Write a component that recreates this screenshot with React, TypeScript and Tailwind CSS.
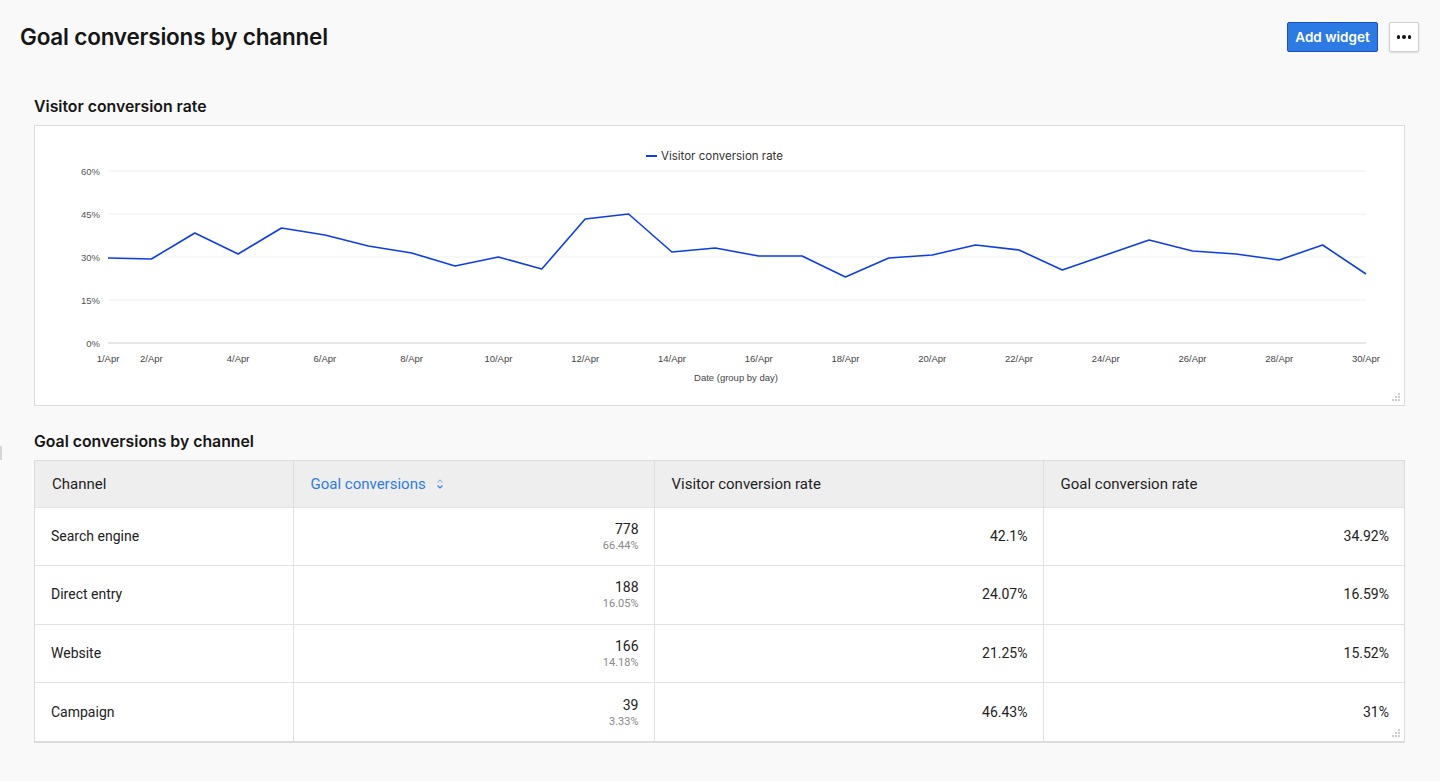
import React from "react"

const ys = [258, 259, 233, 254, 228, 235, 246, 253, 266, 257, 269, 219, 214, 252, 248, 256, 256, 277, 258, 255, 245, 250, 270, 255, 240, 251, 254, 260, 245, 274]
const x0 = 108
const step = (1366 - 108) / 29
const xOf = (i: number) => x0 + i * step

const grid = [
    { y: 171, label: "60%" },
    { y: 214, label: "45%" },
    { y: 257, label: "30%" },
    { y: 300, label: "15%" },
    { y: 343, label: "0%" },
]

const rows = [
    { channel: "Search engine", goals: "778", share: "66.44%", vcr: "42.1%", gcr: "34.92%" },
    { channel: "Direct entry", goals: "188", share: "16.05%", vcr: "24.07%", gcr: "16.59%" },
    { channel: "Website", goals: "166", share: "14.18%", vcr: "21.25%", gcr: "15.52%" },
    { channel: "Campaign", goals: "39", share: "3.33%", vcr: "46.43%", gcr: "31%" },
]

function ResizeGrip() {
    return (
        <svg width="10" height="10" viewBox="0 0 10 10" className="absolute right-[3px] bottom-[3px]">
            {[
                [8, 2],
                [5, 5],
                [8, 5],
                [2, 8],
                [5, 8],
                [8, 8],
            ].map(([cx, cy], i) => (
                <circle key={i} cx={cx} cy={cy} r="0.9" fill="#b5b5b5" />
            ))}
        </svg>
    )
}

function Chart() {
    const labels = [1, 2, 4, 6, 8, 10, 12, 14, 16, 18, 20, 22, 24, 26, 28, 30]
    const pts = ys.map((y, i) => `${xOf(i).toFixed(1)},${y}`).join(" ")
    return (
        <svg width="1369" height="279" viewBox="35 126 1369 279" className="block">
            {/* legend */}
            <line x1="646" y1="156" x2="657" y2="156" stroke="#0b3ee6" strokeWidth="2" />
            <text x="661" y="160" fontSize="11.5" fill="#333" fontFamily="Inter, sans-serif">
                Visitor conversion rate
            </text>
            {/* grid */}
            {grid.map((g) => (
                <g key={g.label}>
                    <line x1="108" x2="1366" y1={g.y} y2={g.y} stroke={g.y === 343 ? "#cfcfcf" : "#efefef"} strokeWidth="1" />
                    <text x="100" y={g.y + 3.5} fontSize="9.5" fill="#555" textAnchor="end" fontFamily="'Liberation Sans', Arial, sans-serif">
                        {g.label}
                    </text>
                </g>
            ))}
            {labels.map((d) => (
                <text key={d} x={xOf(d - 1)} y="362" fontSize="9.5" fill="#444" textAnchor="middle" fontFamily="'Liberation Sans', Arial, sans-serif">
                    {d}/Apr
                </text>
            ))}
            <text x="736" y="381" fontSize="9.5" fill="#444" textAnchor="middle" fontFamily="'Liberation Sans', Arial, sans-serif">
                Date (group by day)
            </text>
            <polyline points={pts} fill="none" stroke="#0b3ee6" strokeWidth="1.6" strokeLinejoin="round" />
        </svg>
    )
}

function SortIcon() {
    return (
        <svg width="8" height="12" viewBox="0 0 8 12" className="ml-[10px] mt-[1px]">
            <path d="M1.5 4.5 L4 2 L6.5 4.5" fill="none" stroke="#9db6dc" strokeWidth="1.1" />
            <path d="M1.5 7.5 L4 10 L6.5 7.5" fill="none" stroke="#2f7ae5" strokeWidth="1.1" />
        </svg>
    )
}

export default function App() {
    return (
        <div className="min-h-[781px] bg-[#f9f9f9] relative" style={{ fontFamily: "Inter, sans-serif" }}>
            <div className="absolute left-0 top-[446px] h-[14px] w-[2px] bg-[#d6d6d6]" />
            {/* Header */}
            <div className="flex items-center justify-between pt-[22px] pl-[20px] pr-[21px]">
                <h1 className="text-[22.5px] leading-[28px] font-semibold text-[#161616] tracking-[-0.2px]">Goal conversions by channel</h1>
                <div className="flex items-center gap-[11px]">
                    <button className="h-[30px] w-[91px] rounded-[2px] border border-[#1c4fc4] bg-[#2c7be5] text-[13.5px] font-semibold text-white">
                        Add widget
                    </button>
                    <button className="flex h-[30px] w-[30px] items-center justify-center gap-[2px] rounded-[2px] border border-[#cfcfcf] bg-white shadow-[0_1px_2px_rgba(0,0,0,0.12)]">
                        <span className="h-[3.5px] w-[3.5px] rounded-full bg-[#111]" />
                        <span className="h-[3.5px] w-[3.5px] rounded-full bg-[#111]" />
                        <span className="h-[3.5px] w-[3.5px] rounded-full bg-[#111]" />
                    </button>
                </div>
            </div>

            <div className="pl-[34px] pr-[35px]">
                {/* Chart widget */}
                <h2 className="mt-[44px] text-[15.8px] leading-[22px] font-semibold text-[#161616]">Visitor conversion rate</h2>
                <div className="relative mt-[7px] h-[281px] border border-[#dcdcdc] bg-white">
                    <Chart />
                    <ResizeGrip />
                </div>

                {/* Table widget */}
                <h2 className="mt-[25px] text-[15.8px] leading-[22px] font-semibold text-[#161616]">Goal conversions by channel</h2>
                <div className="relative mt-[7px] border border-[#dcdcdc] border-b-2 bg-white" style={{ fontFamily: "Roboto, sans-serif" }}>
                    <table className="w-full border-collapse table-fixed">
                        <colgroup>
                            <col className="w-[258px]" />
                            <col className="w-[361px]" />
                            <col className="w-[389px]" />
                            <col />
                        </colgroup>
                        <thead>
                            <tr className="h-[46px] bg-[#eeeeee] text-[15px] text-[#1e1e1e]">
                                <th className="px-[17px] text-left font-normal border-r border-[#dedede]">Channel</th>
                                <th className="px-[17px] text-left font-normal border-r border-[#dedede] text-[#2f7ae5]">
                                    <span className="flex items-center">
                                        Goal conversions
                                        <SortIcon />
                                    </span>
                                </th>
                                <th className="px-[17px] text-left font-normal border-r border-[#dedede]">Visitor conversion rate</th>
                                <th className="px-[17px] text-left font-normal">Goal conversion rate</th>
                            </tr>
                        </thead>
                        <tbody>
                            {rows.map((r) => (
                                <tr key={r.channel} className="h-[58.5px] border-t border-[#e2e2e2] text-[14px] text-[#222]">
                                    <td className="px-[16px] border-r border-[#e2e2e2]">{r.channel}</td>
                                    <td className="px-[15px] text-right border-r border-[#e2e2e2]">
                                        <div className="leading-[18px]">{r.goals}</div>
                                        <div className="text-[11px] leading-[15px] text-[#888]">{r.share}</div>
                                    </td>
                                    <td className="px-[15px] text-right border-r border-[#e2e2e2]">{r.vcr}</td>
                                    <td className="px-[15px] text-right">{r.gcr}</td>
                                </tr>
                            ))}
                        </tbody>
                    </table>
                    <ResizeGrip />
                </div>
            </div>
        </div>
    )
}
